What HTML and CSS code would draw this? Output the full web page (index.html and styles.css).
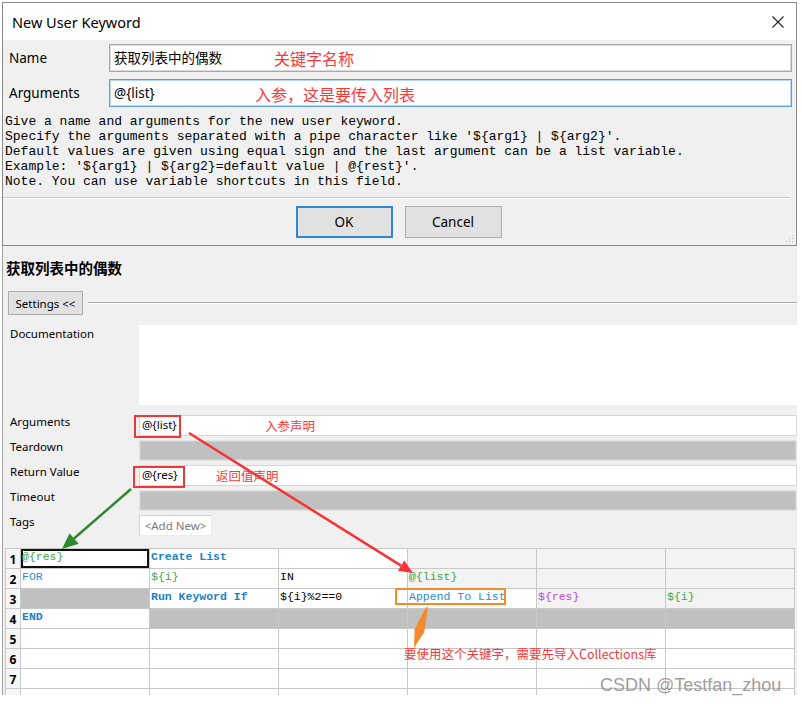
FILE: index.html
```html
<!DOCTYPE html>
<html lang="zh-CN">
<head>
  <meta charset="UTF-8">
  <meta name="viewport" content="width=device-width, initial-scale=1.0">
  <title>New User Keyword</title>
  <link rel="stylesheet" href="styles.css">
</head>
<body>
  <!-- New User Keyword dialog -->
  <div class="dialog">
    <div class="dialog-title">
      <span>New User Keyword</span>
      <svg class="close-icon" width="12" height="12" viewBox="0 0 12 12">
        <path d="M0.5 0.5 L11.5 11.5 M11.5 0.5 L0.5 11.5" stroke="#222" stroke-width="1.1" fill="none"/>
      </svg>
    </div>
    <div class="dialog-body">
      <div class="field-row">
        <label class="field-label">Name</label>
        <div class="text-input">获取列表中的偶数<span class="note note-name">关键字名称</span></div>
      </div>
      <div class="field-row">
        <label class="field-label">Arguments</label>
        <div class="text-input focused">@{list}<span class="note note-args">入参，这是要传入列表</span></div>
      </div>
      <pre class="help-text">Give a name and arguments for the new user keyword.
Specify the arguments separated with a pipe character like '${arg1} | ${arg2}'.
Default values are given using equal sign and the last argument can be a list variable.
Example: '${arg1} | ${arg2}=default value | @{rest}'.
Note. You can use variable shortcuts in this field.</pre>
      <div class="separator"></div>
      <div class="button-row">
        <button class="btn btn-default">OK</button>
        <button class="btn">Cancel</button>
      </div>
      <svg class="grip" width="8" height="8" viewBox="0 0 8 8">
        <rect x="6" y="0" width="1" height="1" fill="#b8b8b8"/>
        <rect x="3" y="3" width="1" height="1" fill="#b8b8b8"/>
        <rect x="6" y="3" width="1" height="1" fill="#b8b8b8"/>
        <rect x="0" y="6" width="1" height="1" fill="#b8b8b8"/>
        <rect x="3" y="6" width="1" height="1" fill="#b8b8b8"/>
        <rect x="6" y="6" width="1" height="1" fill="#b8b8b8"/>
      </svg>
    </div>
  </div>

  <!-- Keyword editor -->
  <div class="keyword-page">
    <h2 class="keyword-name">获取列表中的偶数</h2>

    <div class="settings-bar">
      <button class="settings-btn">Settings &lt;&lt;</button>
      <div class="settings-line"></div>
    </div>

    <div class="settings">
      <div class="setting-label">Documentation</div>
      <div class="setting-doc"></div>

      <div class="setting-label">Arguments</div>
      <div class="setting-field">
        <span class="mark mark-list"></span>@{list}
        <span class="note note-small note-arg-decl">入参声明</span>
      </div>

      <div class="setting-label">Teardown</div>
      <div class="setting-field disabled"></div>

      <div class="setting-label">Return Value</div>
      <div class="setting-field">
        <span class="mark mark-res"></span>@{res}
        <span class="note note-small note-ret-decl">返回值声明</span>
      </div>

      <div class="setting-label">Timeout</div>
      <div class="setting-field disabled"></div>

      <div class="setting-label">Tags</div>
      <div class="setting-tags"><span class="add-new">&lt;Add New&gt;</span></div>
    </div>

    <div class="steps">
      <div class="row-num">1</div>
      <div class="cell var selected">@{res}</div>
      <div class="cell kw bold">Create List</div>
      <div class="cell"></div>
      <div class="cell light"></div>
      <div class="cell light"></div>
      <div class="cell light"></div>

      <div class="row-num">2</div>
      <div class="cell kw">FOR</div>
      <div class="cell var">${i}</div>
      <div class="cell">IN</div>
      <div class="cell var light">@{list}</div>
      <div class="cell light"></div>
      <div class="cell light"></div>

      <div class="row-num">3</div>
      <div class="cell empty"></div>
      <div class="cell kw bold">Run Keyword If</div>
      <div class="cell">${i}%2==0</div>
      <div class="cell kw"><span class="mark mark-append"></span>Append To List</div>
      <div class="cell scalar light">${res}</div>
      <div class="cell var light">${i}</div>

      <div class="row-num">4</div>
      <div class="cell kw bold">END</div>
      <div class="cell empty"></div>
      <div class="cell empty"></div>
      <div class="cell empty"></div>
      <div class="cell empty"></div>
      <div class="cell empty"></div>

      <div class="row-num">5</div>
      <div class="cell"></div><div class="cell"></div><div class="cell"></div>
      <div class="cell"></div><div class="cell"></div><div class="cell"></div>

      <div class="row-num">6</div>
      <div class="cell"></div><div class="cell"></div><div class="cell"></div>
      <div class="cell"></div><div class="cell"></div><div class="cell"></div>

      <div class="row-num">7</div>
      <div class="cell"></div><div class="cell"></div><div class="cell"></div>
      <div class="cell"></div><div class="cell"></div><div class="cell"></div>

      <div class="row-num">8</div>
      <div class="cell"></div><div class="cell"></div><div class="cell"></div>
      <div class="cell"></div><div class="cell"></div><div class="cell"></div>

      <span class="note note-collections">要使用这个关键字，需要先导入Collections库</span>
    </div>
  </div>

  <!-- Pointer arrows drawn on top -->
  <svg class="arrows" width="802" height="704" viewBox="0 0 802 704">
    <line x1="189" y1="433" x2="401" y2="565.6" stroke="#f53535" stroke-width="2.5"/>
    <polygon points="413,573 397.9,570.7 404.3,560.5" fill="#f53535"/>
    <line x1="131" y1="489" x2="74" y2="538.5" stroke="#2f8a2f" stroke-width="2.5"/>
    <polygon points="62,549 69.5,533.2 78.7,543.8" fill="#2f8a2f"/>
    <polygon points="426,607 428,607.6 424.2,632.3 414,648 414.6,629.3" fill="#f58a2c"/>
  </svg>

  <div class="watermark">CSDN @Testfan_zhou</div>
</body>
</html>
```

FILE: styles.css
```css
/* Page */
body {
  margin: 0;
  width: 802px;
  height: 704px;
  overflow: hidden;
  position: relative;
  background-color: #fff;
  font-family: "Noto Sans", "Noto Sans CJK SC", sans-serif;
  color: #000;
}

/* Dialog */
.dialog {
  margin: 2px 0 0 2px;
  width: 795px;
  height: 244px;
  box-sizing: border-box;
  border: 1px solid #8a8a8a;
  display: flex;
  flex-direction: column;
}
.dialog-title {
  height: 37px;
  flex: none;
  background-color: #fff;
  display: flex;
  align-items: center;
  justify-content: space-between;
  padding: 0 12px 0 9px;
  font-size: 14.5px;
}
.dialog-body {
  flex: 1;
  background-color: #f0f0f0;
  padding: 4px 4px 0 2px;
  position: relative;
}
.field-row {
  display: flex;
  align-items: center;
  height: 28px;
  margin-bottom: 7px;
}
.field-label {
  width: 104px;
  padding-left: 4px;
  box-sizing: border-box;
  font-size: 13.5px;
}
.text-input {
  flex: 1;
  height: 28px;
  box-sizing: border-box;
  padding-left: 4px;
  border: 1px solid #a9a9a9;
  box-shadow: inset 0 0 0 1px #dadada;
  background-color: #fff;
  font-size: 13.5px;
  line-height: 26px;
  position: relative;
}
.text-input.focused {
  border-color: #5ea2dd;
  box-shadow: inset 0 0 0 1px #b7d6f1;
}
.help-text {
  margin: 6px 0 0 0;
  font-family: "Liberation Mono", monospace;
  font-size: 13px;
  line-height: 15px;
}
.separator {
  margin: 8px 2px 0 -2px;
  border-top: 1px solid #c9c9c9;
  border-bottom: 1px solid #fff;
}
.button-row {
  display: flex;
  justify-content: center;
  gap: 12px;
  margin-top: 7px;
}
.btn {
  width: 97px;
  height: 32px;
  box-sizing: border-box;
  background-color: #e1e1e1;
  border: 1px solid #adadad;
  font-family: "Noto Sans", sans-serif;
  font-size: 13.5px;
  color: #000;
  padding: 0;
}
.btn-default {
  border: 2px solid #2f86d8;
}
.grip {
  position: absolute;
  right: 2px;
  bottom: 2px;
}

/* Annotations */
.note {
  position: absolute;
  color: #f63a3a;
  font-family: "Noto Sans CJK SC", sans-serif;
  font-size: 16px;
  line-height: 20px;
  white-space: nowrap;
}
.note-name {
  left: 164px;
  top: 3px;
}
.note-args {
  left: 145px;
  top: 4px;
}
.note-small {
  font-size: 12.5px;
  line-height: 16px;
  top: 2px;
}
.note-arg-decl {
  left: 125px;
}
.note-ret-decl {
  left: 76px;
}
.note-collections {
  left: 398px;
  top: 97px;
  font-size: 12.5px;
  line-height: 16px;
}
.mark {
  position: absolute;
  box-sizing: border-box;
  border: 2px solid #ee3838;
}
.mark-list {
  left: -6px;
  top: -1px;
  width: 47px;
  height: 23px;
}
.mark-res {
  left: -7px;
  top: 0;
  width: 52px;
  height: 22px;
}
.mark-append {
  left: -13px;
  top: -1px;
  width: 111px;
  height: 17px;
  border-color: #f58a2c;
}

/* Keyword editor */
.keyword-page {
  margin-left: 2px;
  width: 795px;
  height: 449px;
  box-sizing: border-box;
  border-left: 1px solid #a3a3a3;
  background-color: #f0f0f0;
  overflow: hidden;
  padding-top: 12px;
}
.keyword-name {
  margin: 0 0 0 3px;
  font-size: 14.5px;
  line-height: 20px;
  font-weight: bold;
}
.settings-bar {
  display: flex;
  align-items: center;
  gap: 5px;
  margin: 13px 0 0 5px;
}
.settings-btn {
  width: 75px;
  height: 24px;
  box-sizing: border-box;
  background-color: #e1e1e1;
  border: 1px solid #adadad;
  font-family: "Noto Sans", sans-serif;
  font-size: 11.5px;
  padding: 0;
}
.settings-line {
  flex: 1;
  border-top: 1px solid #a9a9a9;
  border-bottom: 1px solid #fff;
}
.settings {
  display: grid;
  grid-template-columns: 136px 1fr;
  grid-template-rows: 88px;
  grid-auto-rows: 25px;
  margin-top: 10px;
  font-size: 11.5px;
}
.setting-label {
  padding: 1px 0 0 7px;
  line-height: 16px;
}
.setting-doc {
  background-color: #fff;
}
.settings > :nth-child(1),
.settings > :nth-child(2) {
  height: 80px;
  margin-bottom: 8px;
}
.setting-field {
  margin: 2px 0 2px 0;
  box-sizing: border-box;
  border: 1px solid #d6d6d6;
  background-color: #fff;
  padding-left: 2px;
  line-height: 18px;
  position: relative;
}
.setting-field.disabled {
  background-color: #c0c0c0;
  border-color: #e2e2e2;
  box-shadow: inset 0 0 0 1px #cdcdcd;
}
.setting-tags {
  padding-top: 2px;
}
.add-new {
  display: inline-block;
  width: 73px;
  height: 21px;
  box-sizing: border-box;
  background-color: #fff;
  border: 1px solid #d0d0d0;
  border-right-color: #ececec;
  border-bottom-color: #ececec;
  color: #7a7a7a;
  text-align: center;
  line-height: 19px;
}

/* Steps grid */
.steps {
  display: grid;
  grid-template-columns: 15px repeat(6, 129px);
  grid-auto-rows: 20px;
  margin: 10px 0 0 2px;
  border-top: 1px solid #c8c8c8;
  border-left: 1px solid #c8c8c8;
  position: relative;
  width: max-content;
}
.row-num {
  box-sizing: border-box;
  border-right: 1px solid #c8c8c8;
  border-bottom: 1px solid #c8c8c8;
  background-color: #f6f6f6;
  font-size: 12px;
  font-weight: bold;
  text-align: center;
  line-height: 22px;
}
.cell {
  box-sizing: border-box;
  border-right: 1px solid #c8c8c8;
  border-bottom: 1px solid #c8c8c8;
  background-color: #fff;
  padding-left: 1px;
  font-family: "Liberation Mono", monospace;
  font-size: 11.5px;
  line-height: 16px;
  white-space: nowrap;
  position: relative;
}
.cell.light {
  background-color: #f3f3f3;
}
.cell.empty {
  background-color: #c0c0c0;
}
.cell.kw {
  color: #2b8fd2;
}
.cell.bold {
  font-weight: bold;
  color: #1883c6;
}
.cell.var {
  color: #42a447;
}
.cell.scalar {
  color: #bd46e6;
}
.cell.selected {
  box-shadow: inset 0 0 0 2px #111;
}

/* Overlay arrows and watermark */
.arrows {
  position: absolute;
  left: 0;
  top: 0;
  pointer-events: none;
}
.watermark {
  position: absolute;
  left: 600px;
  top: 674px;
  font-family: "Liberation Sans", sans-serif;
  font-size: 18px;
  line-height: 22px;
  color: rgba(140, 140, 140, 0.85);
}
```
